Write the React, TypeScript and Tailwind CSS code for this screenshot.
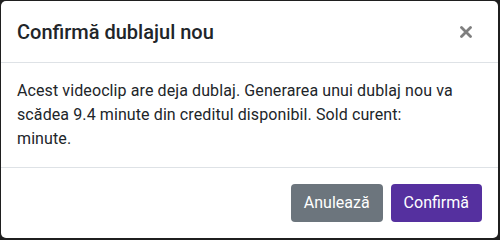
import React from "react";

export default function App() {
  const font = { fontFamily: "Roboto, 'Liberation Sans', Arial, sans-serif" };
  return (
    <div className="w-[500px] h-[240px] bg-[#1f1f1f] p-px overflow-hidden" style={font}>
      <div className="w-[497px] bg-white rounded-[5px] flex flex-col text-[#212529]">
        <div className="flex items-center h-[62px] px-4 border-b border-[#dee2e6]">
          <h5 className="text-[20px] leading-[30px] font-medium">Confirmă dublajul nou</h5>
          <button className="ml-auto mr-[10px] w-3 h-3 flex items-center justify-center">
            <svg width="12" height="12" viewBox="0 0 12 12">
              <path d="M1.5 1.5 L10.5 10.5 M10.5 1.5 L1.5 10.5" stroke="#7f7f7f" strokeWidth="2.8" strokeLinecap="round" />
            </svg>
          </button>
        </div>
        <div className="p-4 text-[16px] leading-6 tracking-[0.1px] border-b border-[#dee2e6]">
          <p>
            Acest videoclip are deja dublaj. Generarea unui dublaj nou va scădea 9.4 minute din creditul disponibil. Sold curent:
            <br />
            minute.
          </p>
        </div>
        <div className="flex justify-end items-center p-3">
          <button className="h-[38px] px-[13px] rounded-[4px] bg-[#6c757d] text-white text-[16px] m-1">Anulează</button>
          <button className="h-[38px] px-[13px] rounded-[4px] bg-[#55309f] text-white text-[16px] m-1">Confirmă</button>
        </div>
      </div>
    </div>
  );
}
